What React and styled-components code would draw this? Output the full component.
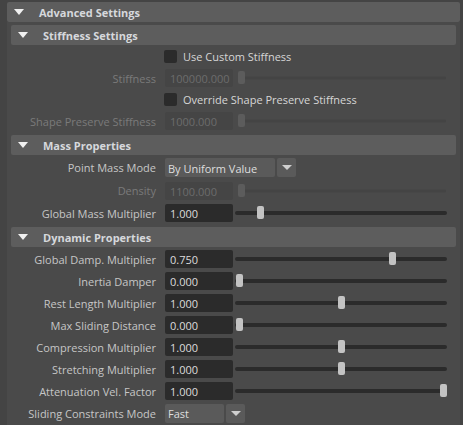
import React from "react";
import styled, { createGlobalStyle } from "styled-components";

const GlobalStyle = createGlobalStyle`
  html, body { margin: 0; padding: 0; background: #444444; }
  body { font-family: "Open Sans", "Liberation Sans", Arial, sans-serif; font-size: 11px; }
  * { box-sizing: border-box; }
`;

const Page = styled.div`
  width: 463px;
  height: 425px;
  overflow: hidden;
  padding: 2px 3px 0 7px;
  background: #444444;
`;

const Frame = styled.div`
  display: flex;
  flex-direction: column;
  margin-bottom: ${(p) => (p.$outer ? 0 : 2)}px;
`;

const Header = styled.div`
  height: 20px;
  flex: none;
  display: flex;
  align-items: center;
  background: #5d5d5d;
  border-radius: 2px;
  color: #d6d8dc;
  font-weight: bold;
  font-size: 11px;
`;

const Tri = styled.span`
  width: 0;
  height: 0;
  margin-left: 7px;
  margin-right: 15px;
  border-left: 5.5px solid transparent;
  border-right: 5.5px solid transparent;
  border-top: 6px solid #f0f0f0;
`;

const Body = styled.div`
  display: flex;
  flex-direction: column;
  background: #4a4a4a;
  padding: ${(p) => (p.$outer ? "3px 4px 0 4px" : "1px 0 1px 0")};
`;

const Row = styled.div`
  height: ${(p) => p.$h || 22}px;
  display: flex;
  align-items: center;
`;

const Label = styled.div`
  width: 145px;
  flex: none;
  text-align: right;
  color: ${(p) => (p.$disabled ? "#7a7a7a" : "#c6c6c6")};
  white-space: nowrap;
  margin-right: 9px;
`;

const Field = styled.div`
  width: 68px;
  height: 18px;
  flex: none;
  border-radius: 2px;
  background: ${(p) => (p.$disabled ? "#454545" : "#2b2b2b")};
  color: ${(p) => (p.$disabled ? "#6c6c6c" : "#dcdcdc")};
  display: flex;
  align-items: center;
  padding-left: 5px;
  padding-top: 1px;
`;

const SliderWrap = styled.div`
  position: relative;
  height: 14px;
  flex: none;
  width: ${(p) => (p.$disabled ? 208 : 212)}px;
  margin-left: ${(p) => (p.$disabled ? 5 : 2)}px;
`;

const Track = styled.div`
  position: absolute;
  left: 0;
  right: 0;
  top: 50%;
  height: ${(p) => (p.$disabled ? 3 : 4)}px;
  transform: translateY(-50%);
  border-radius: 2px;
  background: ${(p) => (p.$disabled ? "#444444" : "#2b2b2b")};
`;

const Thumb = styled.div`
  position: absolute;
  top: 0;
  width: 7px;
  height: 13px;
  border-radius: 2px;
  background: ${(p) => (p.$disabled ? "#5c5c5c" : "#c3c3c3")};
`;

const CheckSpacer = styled.div`
  width: 153px;
  flex: none;
`;

const Box = styled.div`
  width: 13px;
  height: 13px;
  border-radius: 2px;
  background: #2b2b2b;
  margin-right: 6px;
`;

const CheckText = styled.span`
  color: #d6d6d6;
`;

const Select = styled.div`
  display: flex;
  gap: 2px;
  height: 19px;
`;

const SelectMain = styled.div`
  width: ${(p) => p.$w}px;
  height: 19px;
  border-radius: 2px;
  background: #5a5a5a;
  color: #dedede;
  display: flex;
  align-items: center;
  padding: 1px 0 0 3px;
  white-space: nowrap;
`;

const SelectBtn = styled.div`
  width: 19px;
  height: 19px;
  border-radius: 2px;
  background: #5a5a5a;
  display: flex;
  align-items: center;
  justify-content: center;
`;

const Arrow = styled.span`
  width: 0;
  height: 0;
  border-left: 5px solid transparent;
  border-right: 5px solid transparent;
  border-top: 5px solid #cfcfcf;
`;

function Slider({ frac, disabled }) {
  const range = disabled ? 201 : 204;
  const left = disabled ? 0 : 1 + frac * range;
  return (
    <SliderWrap $disabled={disabled}>
      <Track $disabled={disabled} />
      <Thumb $disabled={disabled} style={{ left: `${left}px` }} />
    </SliderWrap>
  );
}

function NumRow({ label, value, frac, disabled, h }) {
  return (
    <Row $h={h}>
      <Label $disabled={disabled}>{label}</Label>
      <Field $disabled={disabled}>{value}</Field>
      <Slider frac={frac} disabled={disabled} />
    </Row>
  );
}

function CheckRow({ text, h }) {
  return (
    <Row $h={h}>
      <CheckSpacer />
      <Box />
      <CheckText>{text}</CheckText>
    </Row>
  );
}

function SelectRow({ label, value, w, h }) {
  return (
    <Row $h={h}>
      <Label>{label}</Label>
      <Select>
        <SelectMain $w={w}>{value}</SelectMain>
        <SelectBtn>
          <Arrow />
        </SelectBtn>
      </Select>
    </Row>
  );
}

function Section({ title, children }) {
  return (
    <Frame>
      <Header>
        <Tri />
        {title}
      </Header>
      <Body>{children}</Body>
    </Frame>
  );
}

export default function App() {
  return (
    <Page>
      <GlobalStyle />
      <Frame $outer>
        <Header>
          <Tri />
          Advanced Settings
        </Header>
        <Body $outer>
          <Section title="Stiffness Settings">
            <CheckRow text="Use Custom Stiffness" h={21} />
            <NumRow label="Stiffness" value="100000.000" disabled />
            <CheckRow text="Override Shape Preserve Stiffness" h={21} />
            <NumRow label="Shape Preserve Stiffness" value="1000.000" disabled />
          </Section>
          <Section title="Mass Properties">
            <SelectRow label="Point Mass Mode" value="By Uniform Value" w={110} h={23} />
            <NumRow label="Density" value="1100.000" disabled h={23} />
            <NumRow label="Global Mass Multiplier" value="1.000" frac={0.103} />
          </Section>
          <Section title="Dynamic Properties">
            <NumRow label="Global Damp. Multiplier" value="0.750" frac={0.75} />
            <NumRow label="Inertia Damper" value="0.000" frac={0} />
            <NumRow label="Rest Length Multiplier" value="1.000" frac={0.5} />
            <NumRow label="Max Sliding Distance" value="0.000" frac={0} />
            <NumRow label="Compression Multiplier" value="1.000" frac={0.5} />
            <NumRow label="Stretching Multiplier" value="1.000" frac={0.5} />
            <NumRow label="Attenuation Vel. Factor" value="1.000" frac={1} />
            <SelectRow label="Sliding Constraints Mode" value="Fast" w={59} />
          </Section>
        </Body>
      </Frame>
    </Page>
  );
}
